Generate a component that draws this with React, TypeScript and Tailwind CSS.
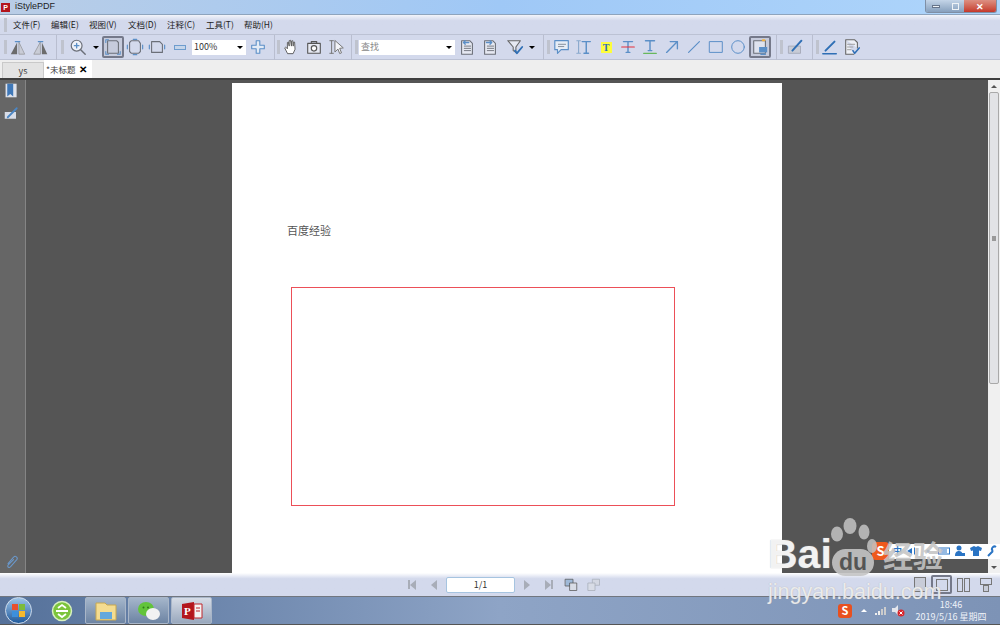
import type { ReactNode } from "react";

const cjk = { fontFamily: '"Noto Sans CJK SC", "Liberation Sans", sans-serif' };

const menus = [
  { label: "文件(F)", w: "w-[38px]" },
  { label: "编辑(E)", w: "w-[38px]" },
  { label: "视图(V)", w: "w-[39px]" },
  { label: "文档(D)", w: "w-[39px]" },
  { label: "注释(C)", w: "w-[39px]" },
  { label: "工具(T)", w: "w-[38px]" },
  { label: "帮助(H)", w: "w-[38px]" },
];

const Ico = ({ children, size = 18 }: { children: ReactNode; size?: number }) => (
  <svg width={size} height={size} viewBox="0 0 20 20" fill="none" strokeLinecap="round" strokeLinejoin="round">
    {children}
  </svg>
);

const Btn = ({ children, active }: { children: ReactNode; active?: boolean }) => (
  <div
    className={`w-[22px] h-[22px] shrink-0 flex items-center justify-center rounded-[2px] ${
      active ? "border-2 border-[#75798a] bg-[#c6cbdc]" : ""
    }`}
  >
    {children}
  </div>
);

const Gripper = () => <div className="w-[3px] h-[14px] shrink-0 bg-[#bfc3ce]" />;
const Sep = () => <div className="w-px h-[25px] shrink-0 bg-[#eef0f6] border-l border-[#b9bed0]" />;
const Caret = () => (
  <div className="w-0 h-0 border-x-[3px] border-x-transparent border-t-[3px] border-t-black" />
);

const BLUE = "#5b8fc7";
const GREY = "#6b6f78";

const PageLines = ({ arrow }: { arrow: "l" | "r" }) => (
  <Ico>
    <path d="M4 3h9l3 3v12H4z" stroke={GREY} strokeWidth="1.2" fill="#e6e9f2" />
    <path d="M7 9h7M7 11.5h7M7 14h7" stroke={GREY} strokeWidth="1" />
    <path d={arrow === "l" ? "M12 5H6M8 3L6 5l2 2" : "M6 5h6M10 3l2 2-2 2"} stroke={BLUE} strokeWidth="1.4" />
  </Ico>
);

const Toolbar = () => (
  <div className="h-[25px] shrink-0 flex items-center bg-[#d3d9ec] border-b border-[#bcc2d4] pl-[4px]">
    <Gripper />
    <Btn>
      <Ico>
        <path d="M9 5L2 18h7z" fill="#6c6c6c" />
        <path d="M11 5v13h6z" fill="#c9ccd6" stroke="#888" strokeWidth="0.7" />
        <path d="M7 4h5" stroke={BLUE} strokeWidth="1.3" />
      </Ico>
    </Btn>
    <div className="ml-px" />
    <Btn>
      <Ico>
        <path d="M9 5L2 18h7z" fill="#c9ccd6" stroke="#888" strokeWidth="0.7" />
        <path d="M11 5v13h6z" fill="#6c6c6c" />
        <path d="M7 4h5" stroke={BLUE} strokeWidth="1.3" />
      </Ico>
    </Btn>
    <div className="ml-[4px]" />
    <Sep />
    <div className="ml-[4px]" />
    <Gripper />
    <div className="ml-[3px]" />
    <Btn>
      <Ico>
        <circle cx="8.5" cy="8.5" r="6" stroke={GREY} strokeWidth="1.3" fill="#eef1f8" />
        <path d="M13 13l5 5" stroke={GREY} strokeWidth="1.6" />
        <path d="M8.5 6v5M6 8.5h5" stroke={BLUE} strokeWidth="1.5" />
      </Ico>
    </Btn>
    <div className="w-[13px] flex justify-center">
      <Caret />
    </div>
    <Btn active>
      <Ico>
        <path d="M4 3h10l2 2v12H4z" stroke={GREY} strokeWidth="1.2" />
        <path d="M2 2h3M2 2v3M15 18h3M18 18v-3M2 18h3M2 18v-3" stroke={BLUE} strokeWidth="1.2" />
      </Ico>
    </Btn>
    <Btn>
      <Ico>
        <path d="M6 3h8l2 3v9l-2 2H6l-2-2V5z" stroke={GREY} strokeWidth="1.2" />
        <path d="M8 1.5h4M8 18.5h4M1.500 8v4M18.500 8v4" stroke={BLUE} strokeWidth="1.3" />
      </Ico>
    </Btn>
    <Btn>
      <Ico>
        <path d="M4 4h9l3 3v9H4z" stroke={GREY} strokeWidth="1.2" />
        <path d="M1.500 8v4M18.500 8v4" stroke={BLUE} strokeWidth="1.3" />
      </Ico>
    </Btn>
    <div className="ml-px" />
    <Btn>
      <div className="w-[12px] h-[5px] bg-[#c5d5ea] border border-[#6d9cce]" />
    </Btn>
    <div className="ml-px w-[54px] h-[15px] bg-white flex items-center justify-between pl-[2px] pr-[3px] text-[9px] text-[#333]" style={cjk}>
      100%
      <Caret />
    </div>
    <div className="ml-px" />
    <Btn>
      <Ico>
        <path d="M8 3h4v5h5v4h-5v5H8v-5H3V8h5z" stroke={BLUE} strokeWidth="1.2" fill="#e3ebf6" />
      </Ico>
    </Btn>
    <div className="ml-[5px]" />
    <Sep />
    <div className="ml-[2px]" />
    <Gripper />
    <Btn>
      <Ico>
        <path d="M6 17l-3-6 1-1 2 2V5l1-.5L8 9V3l1.500-.5L10.500 9V3.500L12 3l.5 6V5l1.500-.5.5 8-2 4.500z" stroke="#555" strokeWidth="1" fill="#fff" />
      </Ico>
    </Btn>
    <div className="ml-px" />
    <Btn>
      <Ico>
        <rect x="3" y="6" width="14" height="11" stroke="#555" strokeWidth="1.2" fill="#e6e9f2" />
        <path d="M7 6V4h6v2" stroke="#555" strokeWidth="1.2" />
        <circle cx="10" cy="11.500" r="3" stroke="#555" strokeWidth="1.3" fill="#fff" />
      </Ico>
    </Btn>
    <div className="ml-px" />
    <Btn>
      <Ico>
        <path d="M4 3v14M2 3h4M2 17h4" stroke="#777" strokeWidth="1.1" />
        <path d="M8 3l9 8-4 .5 2 5-2 .8-2-5-3 3z" stroke="#777" strokeWidth="1.1" fill="#f3f4f8" />
      </Ico>
    </Btn>
    <div className="ml-[3px]" />
    <Sep />
    <div className="ml-[3px]" />
    <Gripper />
    <div className="w-[96px] h-[15px] ml-[1px] bg-white flex items-center justify-between pl-[2px] pr-[3px] text-[9px] text-[#888]" style={cjk}>
      查找
      <Caret />
    </div>
    <div className="ml-px" />
    <Btn>
      <PageLines arrow="l" />
    </Btn>
    <div className="ml-px" />
    <Btn>
      <PageLines arrow="r" />
    </Btn>
    <div className="ml-[3px]" />
    <Btn>
      <Ico>
        <path d="M2 3h14l-5 7v6l-3-2v-4z" stroke="#666" strokeWidth="1.200" fill="#e6e9f2" />
        <path d="M10 14l2 3 6-7" stroke="#2f6fb5" strokeWidth="2" />
      </Ico>
    </Btn>
    <div className="w-[12px] flex justify-center">
      <Caret />
    </div>
    <div className="ml-[5px]" />
    <Sep />
    <div className="ml-[3px]" />
    <Gripper />
    <div className="ml-px" />
    <Btn>
      <Ico>
        <path d="M2 3h15v10H9l-4 4v-4H2z" stroke={BLUE} strokeWidth="1.300" fill="#e6edf6" />
        <path d="M6 7h8M6 9.500h6" stroke="#7d8793" strokeWidth="1" />
      </Ico>
    </Btn>
    <Btn>
      <Ico>
        <path d="M2 3h4M2 17h4M4 3v14" stroke="#88a8cc" strokeWidth="1.200" />
        <path d="M8 4h9M12.500 4v13M10 17h5" stroke={BLUE} strokeWidth="1.600" />
      </Ico>
    </Btn>
    <Btn>
      <div className="w-[11px] h-[11px] bg-[#fdfd3c] flex items-center justify-center text-[10px] font-bold text-[#2f6fb5]" style={{ fontFamily: '"Liberation Serif", serif' }}>
        T
      </div>
    </Btn>
    <Btn>
      <Ico>
        <path d="M5 4h10M10 4v12M8 16h4" stroke={BLUE} strokeWidth="1.600" />
        <path d="M3 10h14" stroke="#e5303a" strokeWidth="1.300" />
      </Ico>
    </Btn>
    <Btn>
      <Ico>
        <path d="M5 3h10M10 3v11M8 14h4" stroke={BLUE} strokeWidth="1.600" />
        <path d="M3 17h14" stroke="#67b85c" strokeWidth="1.500" />
      </Ico>
    </Btn>
    <Btn>
      <Ico>
        <path d="M4 16L16 4M8 4h8v8" stroke={BLUE} strokeWidth="1.500" />
      </Ico>
    </Btn>
    <Btn>
      <Ico>
        <path d="M4 16L16 4" stroke={BLUE} strokeWidth="1.300" />
      </Ico>
    </Btn>
    <Btn>
      <Ico>
        <rect x="3" y="4" width="14" height="12" stroke={BLUE} strokeWidth="1.100" />
      </Ico>
    </Btn>
    <Btn>
      <Ico>
        <circle cx="10" cy="10" r="7" stroke={BLUE} strokeWidth="1.100" />
      </Ico>
    </Btn>
    <Btn active>
      <Ico>
        <rect x="3" y="3" width="13" height="14" stroke={GREY} strokeWidth="1.200" fill="#dfe3ee" />
        <path d="M13 2.500h2" stroke="#f0b040" strokeWidth="2" />
        <rect x="9" y="10" width="9" height="6" fill={BLUE} />
        <path d="M11 18h5" stroke={BLUE} strokeWidth="1.500" />
      </Ico>
    </Btn>
    <div className="ml-[5px]" />
    <Sep />
    <div className="ml-[3px]" />
    <Gripper />
    <div className="ml-[2px]" />
    <Btn>
      <Ico>
        <rect x="2" y="9" width="13" height="8" fill="#c8ccd6" stroke="#9a9fad" strokeWidth="0.800" />
        <path d="M6 14L16 3" stroke="#2f6fb5" strokeWidth="2.200" />
      </Ico>
    </Btn>
    <div className="ml-[5px]" />
    <Sep />
    <div className="ml-[3px]" />
    <Gripper />
    <Btn>
      <Ico>
        <path d="M5 14L15 4" stroke="#2f6fb5" strokeWidth="2.200" />
        <path d="M2 17.500h15" stroke="#2f6fb5" strokeWidth="1.600" />
      </Ico>
    </Btn>
    <Btn>
      <Ico>
        <path d="M3 2h10l3 3v6M3 2v16h9" stroke="#666" strokeWidth="1.200" fill="#eef0f6" />
        <path d="M5 7h8M5 10h6M5 13h4" stroke="#999" strokeWidth="1" />
        <path d="M11 14l2 3 5-6" stroke="#2f6fb5" strokeWidth="1.700" />
      </Ico>
    </Btn>
  </div>
);

const TabBar = () => (
  <div className="h-[18px] shrink-0 flex items-end bg-[#eeeeee] pl-[2px]">
    <div className="w-[42px] h-[16px] bg-[#e3e3e3] border border-b-0 border-[#c9c9c9] flex items-center justify-center text-[9px] text-[#444]" style={cjk}>
      ys
    </div>
    <div className="w-[48px] h-[18px] bg-white flex items-center pl-[2px] gap-[4px] text-[8.5px] text-[#444]" style={cjk}>
      *未标题
      <span className="text-[10px] font-bold text-black leading-none">✕</span>
    </div>
  </div>
);

const SidePanel = () => (
  <div className="w-[26px] shrink-0 bg-[#666666] border-r border-[#858585] flex flex-col items-center pt-[2px] pr-[2px]">
    <Ico size={17}>
      <path d="M3 2h13v16H3z" fill="#dfe3ec" />
      <path d="M5 2h7v15l-3.500-3L5 17z" fill="#3f78b8" />
    </Ico>
    <div className="mt-[7px]">
      <Ico size={15}>
        <rect x="1" y="8" width="15" height="9" fill="#d8dde8" />
        <path d="M5 15L17 3" stroke="#4b86c4" strokeWidth="2.400" />
      </Ico>
    </div>
    <div className="mt-auto mb-[3px]">
      <Ico size={16}>
        <path d="M5 12l7-8a2.500 2.500 0 0 1 4 3l-8 9a1.600 1.600 0 0 1-3-2l7-7" stroke="#6a98cb" strokeWidth="1.300" />
      </Ico>
    </div>
  </div>
);

const Scrollbar = () => (
  <div className="w-[12px] shrink-0 bg-[#f0f0f0] flex flex-col items-center">
    <div className="h-[12px] flex items-center justify-center">
      <div className="w-0 h-0 border-x-[3px] border-x-transparent border-b-[3px] border-b-[#555]" />
    </div>
    <div className="w-[10px] h-[292px] bg-[#e2e3e6] border border-[#a9a9a9] rounded-[2px] flex items-center justify-center">
      <div className="w-[4px] h-[5px] bg-[#999]" />
    </div>
    <div className="mt-auto h-[11px] flex items-center justify-center">
      <div className="w-0 h-0 border-x-[3px] border-x-transparent border-t-[3px] border-t-[#555]" />
    </div>
  </div>
);

const PdfPage = () => (
  <div className="w-[551px] ml-[206px] mr-[206px] mt-[3px] bg-white overflow-hidden pl-[55px]">
    <div className="mt-[140px] text-[11px] leading-[15px] text-[#555]" style={{ fontFamily: '"Noto Sans CJK SC", serif' }}>
      百度经验
    </div>
    <div className="mt-[49px] ml-[4px] w-[384px] h-[219px] border border-[#ec4f58]" />
  </div>
);

const NavBar = () => (
  <div className="h-[24px] shrink-0 bg-linear-to-b from-white to-[#d3d9ec] to-[25%] border-b border-[#71767f] flex items-center">
    <div className="ml-[408px] flex items-center">
      <div className="flex items-center w-[9px]">
        <div className="w-[2px] h-[9px] bg-[#a8adb8]" />
        <div className="w-0 h-0 border-y-[5px] border-y-transparent border-r-[6px] border-r-[#a8adb8]" />
      </div>
      <div className="ml-[14px] w-0 h-0 border-y-[5px] border-y-transparent border-r-[6px] border-r-[#a8adb8]" />
    </div>
    <div className="ml-[9px] w-[69px] h-[16px] bg-white border border-[#a6c4e0] rounded-[2px] flex items-center justify-center text-[9px] text-[#333]" style={cjk}>
      1/1
    </div>
    <div className="ml-[9px] w-0 h-0 border-y-[5px] border-y-transparent border-l-[6px] border-l-[#a8adb8]" />
    <div className="ml-[15px] flex items-center">
      <div className="w-0 h-0 border-y-[5px] border-y-transparent border-l-[6px] border-l-[#a8adb8]" />
      <div className="w-[2px] h-[9px] bg-[#a8adb8]" />
    </div>
    <div className="ml-[11px]">
      <Ico size={15}>
        <rect x="2" y="3" width="10" height="9" fill="#9fb9d8" stroke="#555" />
        <rect x="8" y="8" width="9" height="10" fill="#d8dce6" stroke="#555" />
      </Ico>
    </div>
    <div className="ml-[7px]">
      <Ico size={15}>
        <rect x="9" y="3" width="9" height="8" fill="#d3d7e2" stroke="#a8adb8" />
        <rect x="3" y="8" width="9" height="10" fill="#d8dce6" stroke="#a8adb8" />
      </Ico>
    </div>
    <div className="ml-auto mr-[4px] flex items-center gap-[1px]">
      <div className="w-[20px] flex justify-center">
        <div className="w-[12px] h-[15px] border border-[#777] bg-[#c8ccd8]" />
      </div>
      <div className="w-[21px] h-[19px] border-2 border-[#75798a] rounded-[2px] flex items-center justify-center">
        <div className="w-[12px] h-[12px] border border-[#777]" />
      </div>
      <div className="w-[21px] flex justify-center gap-[1px]">
        <div className="w-[6px] h-[14px] border border-[#777]" />
        <div className="w-[6px] h-[14px] border border-[#777]" />
      </div>
      <div className="w-[21px] flex flex-col items-center">
        <div className="w-[12px] h-[7px] border border-[#777]" />
        <div className="w-[6px] h-[7px] border border-[#777] bg-[#c8ccd8]" />
      </div>
    </div>
  </div>
);

const TaskButton = ({ children, bright }: { children: ReactNode; bright?: boolean }) => (
  <div
    className={`w-[41px] h-[27px] shrink-0 rounded-[2px] border border-[#a9b6c8] flex items-center justify-center ${
      bright ? "bg-linear-to-b from-[#d6dce6] to-[#99a8bd]" : "bg-linear-to-b from-[#a5b6cb] to-[#6d84a3]"
    }`}
  >
    {children}
  </div>
);

const Taskbar = () => (
  <div className="h-[27px] shrink-0 flex items-center bg-linear-to-r from-[#55719a] via-[#8ea4c6] to-[#7d93b6]">
    <div className="ml-[5px] w-[27px] h-[27px] rounded-full bg-linear-to-b from-[#9cc4e8] to-[#1f5a9c] border border-[#cfdcec] grid grid-cols-2 gap-[1px] p-[6px] shrink-0">
      <div className="bg-[#e8502f]" />
      <div className="bg-[#7cbb3a]" />
      <div className="bg-[#3d8fdc]" />
      <div className="bg-[#f4b92f]" />
    </div>
    <div className="ml-[19px] shrink-0">
      <svg width="22" height="22" viewBox="0 0 22 22" fill="none">
        <circle cx="11" cy="11" r="9.500" fill="#7cc43c" stroke="#d8f0c0" strokeWidth="1.500" />
        <path d="M5 11h12" stroke="#fff" strokeWidth="2" />
        <path d="M7 8l4-3 4 3M7 14l4 3 4-3" stroke="#fff" strokeWidth="1.800" />
      </svg>
    </div>
    <div className="ml-[12px] flex gap-[2px]">
      <TaskButton>
        <svg width="24" height="22" viewBox="0 0 24 22">
          <path d="M2 3h9l2 2h9v15H2z" fill="#f4dc90" stroke="#c8a850" />
          <rect x="6" y="12" width="12" height="7" fill="#64a8dc" />
        </svg>
      </TaskButton>
      <TaskButton>
        <svg width="24" height="20" viewBox="0 0 24 20">
          <ellipse cx="9" cy="8" rx="8" ry="7" fill="#62c43a" />
          <ellipse cx="16" cy="13" rx="7" ry="6" fill="#f2f2f2" />
          <circle cx="6.500" cy="6.500" r="1" fill="#2f7a18" />
          <circle cx="11" cy="6.500" r="1" fill="#2f7a18" />
        </svg>
      </TaskButton>
      <TaskButton bright>
        <svg width="22" height="20" viewBox="0 0 22 20">
          <path d="M1 3l12-2v18L1 17z" fill="#b3161d" />
          <path d="M13 3h8v14h-8z" fill="#f4f4f4" stroke="#c0272d" />
          <path d="M15 7h4M15 10h4" stroke="#c0272d" />
          <text x="3" y="14" fontSize="11" fontWeight="700" fill="#fff" fontFamily="Liberation Serif, serif">P</text>
        </svg>
      </TaskButton>
    </div>
    <div className="ml-auto mr-[13px] flex items-center">
      <div className="w-[14px] h-[14px] rounded-[3px] bg-[#e8501f] text-white text-[11px] font-bold flex items-center justify-center" style={cjk}>
        S
      </div>
      <div className="ml-[9px] w-0 h-0 border-x-[3px] border-x-transparent border-b-[3px] border-b-white" />
      <div className="ml-[8px] flex items-end gap-px h-[9px]">
        <div className="w-[2px] h-[2px] bg-[#eee]" />
        <div className="w-[2px] h-[4px] bg-[#eee]" />
        <div className="w-[2px] h-[6px] bg-[#ccc]" />
        <div className="w-[2px] h-[8px] bg-[#ccc]" />
      </div>
      <div className="ml-[6px]">
        <svg width="13" height="13" viewBox="0 0 13 13">
          <path d="M0 4h3l3-3v10L3 8H0z" fill="#e4e6ec" />
          <circle cx="9" cy="9" r="3.500" fill="#d8262c" />
          <path d="M7.500 7.500l3 3M10.500 7.500l-3 3" stroke="#fff" strokeWidth="1" />
        </svg>
      </div>
      <div className="ml-[10px] w-[72px] flex flex-col items-center text-[9px] leading-[12px] text-[#eef2f8]" style={cjk}>
        <span>18:46</span>
        <span className="whitespace-nowrap">2019/5/16 星期四</span>
      </div>
    </div>
  </div>
);

const ImeBar = () => (
  <div className="absolute left-[872px] top-[542px] w-[128px] h-[18px] flex items-center">
    <div className="w-[17px] h-[18px] rounded-[4px] bg-[#ee5a1e] text-white text-[13px] font-bold flex items-center justify-center shrink-0" style={cjk}>
      S
    </div>
    <div className="flex-1 h-[15px] bg-white flex items-center justify-around text-[#2a74c4] text-[9px] font-bold pl-[2px]" style={cjk}>
      <span>中</span>
      <svg width="12" height="12" viewBox="0 0 12 12" fill="#2a74c4">
        <path d="M1 6l5-3v6zM8 2l1 1v6l-1 1z" />
      </svg>
      <svg width="12" height="12" viewBox="0 0 12 12" fill="#2a74c4">
        <circle cx="6" cy="6" r="1.500" />
      </svg>
      <svg width="12" height="12" viewBox="0 0 12 12" fill="none" stroke="#2a74c4">
        <rect x="0.500" y="3" width="11" height="6" />
        <path d="M3 5h6M3 7h6" />
      </svg>
      <svg width="12" height="12" viewBox="0 0 12 12" fill="#2a74c4">
        <circle cx="5" cy="3" r="2.500" />
        <path d="M1 11c0-4 2-5 4-5s3 1 3 2h3v3z" />
      </svg>
      <svg width="12" height="12" viewBox="0 0 12 12" fill="#2a74c4">
        <path d="M4 1l2 1 2-1 4 2-1 3-2-.5V11H3V5.500L1 6 0 3z" />
      </svg>
      <svg width="12" height="12" viewBox="0 0 12 12" fill="none" stroke="#2a74c4" strokeWidth="2">
        <path d="M2 11l5-5M7 6a2.500 2.500 0 0 1 3-4" />
      </svg>
    </div>
  </div>
);

const Watermark = () => (
  <div className="absolute left-[768px] top-[518px] w-[232px] h-[107px] pointer-events-none text-white" style={{ fontFamily: '"Liberation Sans", sans-serif' }}>
    <svg className="absolute left-[50px] top-0" width="64" height="62" viewBox="0 0 64 62" fill="#c4c4c4" opacity="0.85">
      <ellipse cx="32" cy="8" rx="6.500" ry="8" />
      <ellipse cx="46" cy="14" rx="5.500" ry="7.500" />
      <ellipse cx="19" cy="16" rx="6" ry="7.500" />
      <ellipse cx="54" cy="28" rx="5" ry="7" />
    </svg>
    <div className="absolute left-0 top-[13px] text-[41px] font-bold leading-[46px] text-white/85 [text-shadow:0_0_1px_#aaaaaa]">Bai</div>
    <div className="absolute left-[64px] top-[31px] w-[42px] h-[27px] rounded-full bg-[#c4c4c4]/90 flex items-center justify-center text-[23px] font-bold text-[#555]">
      du
    </div>
    <div className="absolute left-[115px] top-[18px] text-[30px] font-bold leading-[36px] text-[#c4c4c4]/90" style={cjk}>
      经验
    </div>
    <div className="absolute left-0 top-[62px] text-[21.5px] leading-[24px] text-white/75 whitespace-nowrap [text-shadow:0_0_1px_#aaaaaa]">jingyan.baidu.com</div>
  </div>
);

export default function App() {
  return (
    <div className="relative w-[1000px] h-[625px] overflow-hidden flex flex-col bg-[#555555]">
      <div className="h-[15px] shrink-0 flex items-center justify-between bg-linear-to-r from-[#b9cde6] via-[#9fc8f6] to-[#aed5fb] border-b border-[#8ea4bd]">
        <div className="flex items-center pl-[1px] gap-[5px]">
          <div className="w-[9px] h-[9px] bg-[#b3161d] text-[7px] leading-[9px] text-white font-bold text-center" style={{ fontFamily: '"Liberation Sans", sans-serif' }}>
            P
          </div>
          <span className="text-[9px] text-[#222]" style={{ fontFamily: '"Liberation Sans", sans-serif' }}>iStylePDF</span>
        </div>
        <div className="flex h-[13px] self-start mr-[3px] rounded-b-[3px] overflow-hidden border border-t-0 border-[#7f8fa5]">
          <div className="w-[20px] bg-linear-to-b from-[#c4d5e8] to-[#87a0bd] flex items-center justify-center">
            <div className="w-[8px] h-[3px] bg-[#eef2f6] border border-[#66748a]" />
          </div>
          <div className="w-[18px] bg-linear-to-b from-[#c4d5e8] to-[#87a0bd] flex items-center justify-center">
            <div className="w-[7px] h-[7px] border border-[#eef2f6]" />
          </div>
          <div className="w-[32px] bg-linear-to-b from-[#dc8f82] to-[#c4372a] flex items-center justify-center text-[9px] font-bold text-white leading-none">
            ✕
          </div>
        </div>
      </div>
      <div className="h-[20px] shrink-0 flex items-center bg-linear-to-b from-[#f2f4fa] to-[#d3d9ec] to-[30%] border-b border-[#bcc2d4] pl-[4px]">
        <Gripper />
        <div className="flex ml-[6px] text-[8.5px] text-[#222]" style={cjk}>
          {menus.map((m) => (
            <span key={m.label} className={`${m.w} shrink-0 whitespace-nowrap`}>
              {m.label}
            </span>
          ))}
        </div>
      </div>
      <Toolbar />
      <TabBar />
      <div className="h-[2px] shrink-0 bg-[#3e3e3e]" />
      <div className="h-[493px] shrink-0 flex overflow-hidden">
        <SidePanel />
        <PdfPage />
        <div className="flex-1" />
        <Scrollbar />
      </div>
      <NavBar />
      <Taskbar />
      <ImeBar />
      <Watermark />
    </div>
  );
}
